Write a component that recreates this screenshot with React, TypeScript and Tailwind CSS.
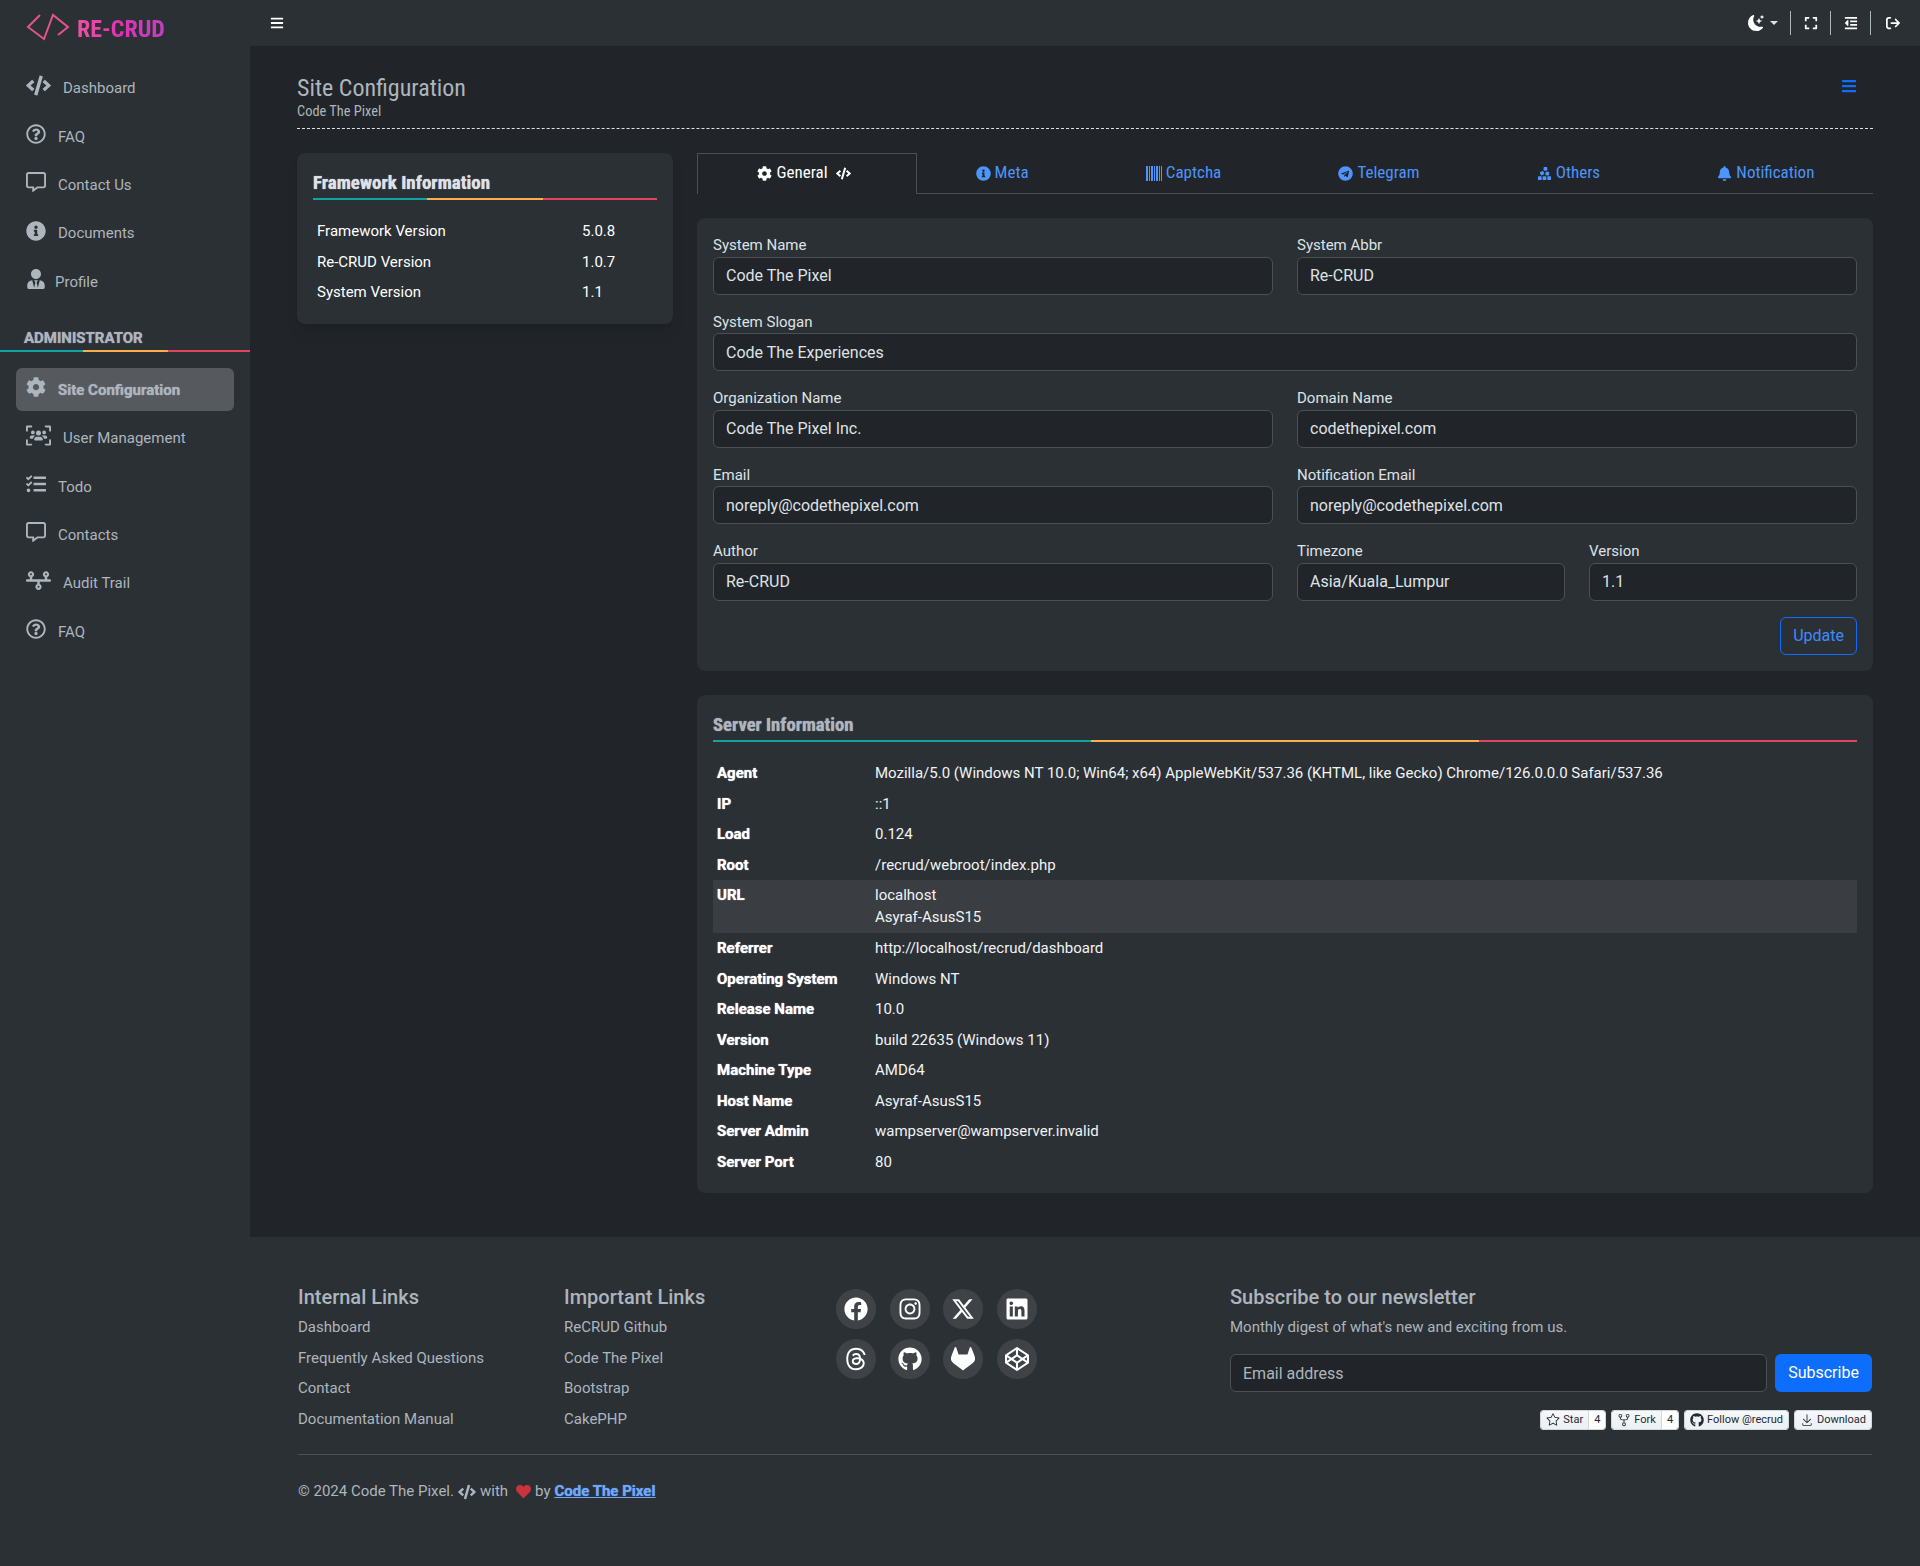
import type { ReactNode } from "react";
import {
  FaBars, FaBell, FaCode, FaCodepen, FaCog, FaExpand, FaFacebook, FaGithub,
  FaHeart, FaInfoCircle, FaInstagram, FaLinkedin, FaOutdent, FaRegCommentAlt, FaRegQuestionCircle,
  FaTasks, FaTelegram, FaUserTie,
} from "react-icons/fa";
import { FaCubesStacked, FaThreads, FaTimeline, FaUsersViewfinder, FaXTwitter, FaArrowRightFromBracket } from "react-icons/fa6";
import { BsGitlab, BsMoonStarsFill } from "react-icons/bs";
import { GoDownload, GoRepoForked, GoStar } from "react-icons/go";

const condensed = "[font-stretch:75%]";
const smeared = "[text-shadow:0_0_1px_currentColor]";

function Rainbow({ className = "" }: { className?: string }) {
  return (
    <div className={`flex h-[2px] ${className}`}>
      <div className="flex-[1] bg-[#11a3a3]" />
      <div className="flex-[1.03] bg-[#fdae4b]" />
      <div className="flex-[1] bg-[#e0445f]" />
    </div>
  );
}

function BarcodeIcon() {
  return (
    <svg width="16" height="15" viewBox="0 0 16 15" fill="currentColor">
      <rect x="0" width="2" height="15" />
      <rect x="3" width="1" height="15" />
      <rect x="5" width="2" height="15" />
      <rect x="8" width="1" height="15" />
      <rect x="10" width="2" height="15" />
      <rect x="13" width="1" height="15" />
      <rect x="15" width="1" height="15" />
    </svg>
  );
}

function NavItem({ icon, label, gap = "gap-3", active }: { icon: ReactNode; label: string; gap?: string; active?: boolean }) {
  return (
    <a className={`flex h-[43px] mb-[5.4px] mx-4 px-[10px] items-center rounded-md text-[15px] text-[#adb5bd] ${gap} ${active ? `bg-[#565a5f] font-bold ${smeared}` : ""}`}>
      <span className="text-[20px] -mt-1">{icon}</span>
      <span className="mt-[2px]">{label}</span>
    </a>
  );
}

function Field({ label, value, className = "" }: { label: string; value: string; className?: string }) {
  return (
    <div className={`mb-4 ${className}`}>
      <label className="block text-[15px] leading-[22.5px] text-[#dee2e6]">{label}</label>
      <input
        readOnly
        defaultValue={value}
        className="block w-full h-[38px] px-3 rounded-md border border-[#495057] bg-[#212529] text-base text-[#dee2e6] outline-none"
      />
    </div>
  );
}

function TabLink({ icon, label }: { icon: ReactNode; label: string }) {
  return (
    <a className="flex-auto flex items-center justify-center gap-1 border-b border-[#495057] text-[15px] text-[#4d94fb]">
      {icon}
      <span className={`text-[17px] ${condensed}`}>{label}</span>
    </a>
  );
}

const serverRows = [
  ["Agent", "Mozilla/5.0 (Windows NT 10.0; Win64; x64) AppleWebKit/537.36 (KHTML, like Gecko) Chrome/126.0.0.0 Safari/537.36"],
  ["IP", "::1"],
  ["Load", "0.124"],
  ["Root", "/recrud/webroot/index.php"],
  ["URL", "localhost\nAsyraf-AsusS15"],
  ["Referrer", "http://localhost/recrud/dashboard"],
  ["Operating System", "Windows NT"],
  ["Release Name", "10.0"],
  ["Version", "build 22635 (Windows 11)"],
  ["Machine Type", "AMD64"],
  ["Host Name", "Asyraf-AsusS15"],
  ["Server Admin", "wampserver@wampserver.invalid"],
  ["Server Port", "80"],
];

const socials = [
  <FaFacebook />, <FaInstagram />, <FaXTwitter />, <FaLinkedin />,
  <FaThreads />, <FaGithub />, <BsGitlab />, <FaCodepen />,
];

function GhButton({ icon, label, count }: { icon: ReactNode; label: string; count?: string }) {
  return (
    <span className="flex h-5 rounded-[3px] overflow-hidden border border-[#d0d7de] text-[11px] leading-[18px] text-[#24292f]">
      <span className="flex items-center gap-[3px] px-[5px] bg-gradient-to-b from-[#f6f8fa] to-[#ebf0f4]">
        {icon}
        {label}
      </span>
      {count && <span className="px-[5px] bg-white border-l border-[#d0d7de]">{count}</span>}
    </span>
  );
}

export default function App() {
  return (
    <div className="flex w-[1920px] h-[1566px] overflow-hidden bg-[#2b3035] font-['Roboto',sans-serif] text-[#dee2e6]">
      {/* Sidebar */}
      <aside className="w-[250px] shrink-0 bg-[#2b3035]">
        <div className="flex h-[46px] items-center">
          <svg width="72" height="46" viewBox="0 0 72 46" fill="none" stroke="#e2558a" strokeWidth="2" className="shrink-0">
            <polyline points="40,15 28,27 44,39 53,15 68,27 58,35" />
          </svg>
          <span className="ml-[5px] mt-[12px] text-[24px] font-bold leading-none bg-gradient-to-r from-[#ea52a0] via-[#e030b5] to-[#c040c0] bg-clip-text text-transparent [font-stretch:75%]">
            RE-CRUD
          </span>
        </div>
        <nav className="mt-[20px]">
          <NavItem icon={<FaCode className="text-[25px]" />} label="Dashboard" />
          <NavItem icon={<FaRegQuestionCircle />} label="FAQ" />
          <NavItem icon={<FaRegCommentAlt />} label="Contact Us" />
          <NavItem icon={<FaInfoCircle />} label="Documents" />
          <NavItem icon={<FaUserTie />} label="Profile" gap="gap-[9px]" />
        </nav>
        <div className={`mt-[25px] pl-6 text-[15px] font-bold leading-[21px] text-[#adb5bd] ${smeared}`}>ADMINISTRATOR</div>
        <Rainbow className="mt-[1px] mb-4" />
        <nav>
          <NavItem icon={<FaCog />} label="Site Configuration" active />
          <NavItem icon={<FaUsersViewfinder className="text-[25px]" />} label="User Management" />
          <NavItem icon={<FaTasks />} label="Todo" />
          <NavItem icon={<FaRegCommentAlt />} label="Contacts" />
          <NavItem icon={<FaTimeline className="text-[25px]" />} label="Audit Trail" />
          <NavItem icon={<FaRegQuestionCircle />} label="FAQ" />
        </nav>
      </aside>

      <div className="flex-1 flex flex-col min-w-0">
        {/* Top bar */}
        <header className="flex h-[46px] shrink-0 items-center justify-between pl-[20px] text-white">
          <FaBars className="text-[14px]" />
          <div className="flex items-center text-[14px]">
            <span className="flex items-center gap-[6px] pr-3">
              <BsMoonStarsFill className="text-[16px]" />
              <span className="border-x-[4px] border-t-[4px] border-x-transparent border-t-[#dee2e6]" />
            </span>
            <span className="flex h-6 w-10 items-center justify-center border-l border-[#adb5bd]"><FaExpand /></span>
            <span className="flex h-6 w-10 items-center justify-center border-l border-[#adb5bd]"><FaOutdent /></span>
            <span className="flex h-6 w-[50px] items-center border-l border-[#adb5bd] pl-[15px]"><FaArrowRightFromBracket /></span>
          </div>
        </header>

        <main className="h-[1191px] shrink-0 bg-[#212529] px-[47px] pt-[24px]">
          {/* Page head */}
          <div className="flex h-[59px] items-start justify-between border-b border-dashed border-[#dee2e6] pt-[3px]">
            <div>
              <h1 className={`text-[24px] leading-[30px] text-[#adb5bd] ${condensed}`}>Site Configuration</h1>
              <p className={`text-[14.4px] leading-[18px] text-[#adb5bd] ${condensed}`}>Code The Pixel</p>
            </div>
            <FaBars className="mt-[5px] mr-[16px] text-[16px] text-[#0d6efd]" />
          </div>

          <div className="grid grid-cols-[376px_1176px] gap-6 mt-6">
            {/* Framework card */}
            <div className="h-[171px] rounded-lg bg-[#2b3035] p-4 shadow-lg">
              <h2 className={`text-[19px] font-bold leading-[28px] text-[#dee2e6] ${condensed} ${smeared}`}>Framework Information</h2>
              <Rainbow className="mt-[1px] mb-[16px]" />
              {[["Framework Version", "5.0.8"], ["Re-CRUD Version", "1.0.7"], ["System Version", "1.1"]].map(([k, v]) => (
                <div key={k} className="flex h-[30.6px] items-center px-1 text-[15px] text-white">
                  <span className="w-[265px]">{k}</span>
                  <span>{v}</span>
                </div>
              ))}
            </div>

            <div>
              {/* Tabs */}
              <div className="flex h-[41px]">
                <a className="flex w-[220px] shrink-0 items-center justify-center gap-1 border border-b-0 border-[#495057] pr-[6px] pb-[2px] text-[15px] text-white">
                  <FaCog />
                  <span className={`text-[17px] ${condensed}`}>General</span>
                  <FaCode className="ml-[4px]" />
                </a>
                <TabLink icon={<FaInfoCircle />} label="Meta" />
                <TabLink icon={<BarcodeIcon />} label="Captcha" />
                <TabLink icon={<FaTelegram />} label="Telegram" />
                <TabLink icon={<FaCubesStacked />} label="Others" />
                <TabLink icon={<FaBell />} label="Notification" />
              </div>

              {/* Form card */}
              <div className="mt-6 h-[453px] rounded-lg bg-[#2b3035] p-4">
                <div className="grid grid-cols-2 gap-x-6">
                  <Field label="System Name" value="Code The Pixel" />
                  <Field label="System Abbr" value="Re-CRUD" />
                  <Field label="System Slogan" value="Code The Experiences" className="col-span-2" />
                  <Field label="Organization Name" value="Code The Pixel Inc." />
                  <Field label="Domain Name" value="codethepixel.com" />
                  <Field label="Email" value="noreply@codethepixel.com" />
                  <Field label="Notification Email" value="noreply@codethepixel.com" />
                  <Field label="Author" value="Re-CRUD" />
                  <div className="grid grid-cols-2 gap-x-6">
                    <Field label="Timezone" value="Asia/Kuala_Lumpur" />
                    <Field label="Version" value="1.1" />
                  </div>
                </div>
                <div className="flex justify-end">
                  <button className="h-[38px] px-3 rounded-md border border-[#0d6efd] text-base text-[#3d8bfd]">Update</button>
                </div>
              </div>

              {/* Server card */}
              <div className="mt-6 h-[498px] rounded-lg bg-[#2b3035] p-4">
                <h2 className={`text-[18.7px] font-bold leading-[28px] text-[#adb5bd] ${condensed} ${smeared}`}>Server Information</h2>
                <Rainbow className="mt-[1px] mb-4" />
                {serverRows.map(([k, v]) => (
                  <div key={k} className={`flex items-start px-1 py-[4px] text-[15px] ${k === "URL" ? "min-h-[53px] bg-[#3a3e43]" : "h-[30.5px]"}`}>
                    <span className={`w-[158px] shrink-0 font-bold text-white leading-[22px] ${smeared}`}>{k}</span>
                    <span className="whitespace-pre-line leading-[22px] text-[#f1f3f5]">{v}</span>
                  </div>
                ))}
              </div>
            </div>
          </div>
        </main>

        {/* Footer */}
        <footer className="flex-1 pl-[48px] pr-[48px] pt-[46px] text-[#adb5bd]">
          <div className="grid grid-cols-[266px_272px_394px_1fr]">
            <div>
              <h5 className="text-[20px] font-medium leading-[28px]">Internal Links</h5>
              <ul className="mt-[1px] text-[15px]">
                {["Dashboard", "Frequently Asked Questions", "Contact", "Documentation Manual"].map((l) => (
                  <li key={l} className="h-[30.5px] leading-[30px]">{l}</li>
                ))}
              </ul>
            </div>
            <div>
              <h5 className="text-[20px] font-medium leading-[28px]">Important Links</h5>
              <ul className="mt-[1px] text-[15px]">
                {["ReCRUD Github", "Code The Pixel", "Bootstrap", "CakePHP"].map((l) => (
                  <li key={l} className="h-[30.5px] leading-[30px]">{l}</li>
                ))}
              </ul>
            </div>
            <div className="grid grid-cols-[repeat(4,40px)] gap-x-[13.7px] gap-y-[10px] pt-[6px] content-start">
              {socials.map((s, i) => (
                <span key={i} className="flex h-10 w-10 items-center justify-center rounded-full bg-[#3f4347] text-[24px] text-white">{s}</span>
              ))}
            </div>
            <div>
              <h5 className="text-[20px] font-medium leading-[28px]">Subscribe to our newsletter</h5>
              <p className="mt-[1px] text-[15px] leading-[30px]">Monthly digest of what's new and exciting from us.</p>
              <div className="mt-[12px] flex gap-2">
                <input
                  readOnly
                  placeholder="Email address"
                  className="h-[38px] flex-1 rounded-md border border-[#495057] bg-[#212529] px-3 text-base text-[#adb5bd] placeholder:text-[#adb5bd] outline-none"
                />
                <button className="h-[38px] w-[97px] rounded-md bg-[#0d6efd] text-base text-white">Subscribe</button>
              </div>
              <div className="mt-[18px] flex justify-end gap-[5px]">
                <GhButton icon={<GoStar className="text-[14px]" />} label="Star" count="4" />
                <GhButton icon={<GoRepoForked className="text-[14px]" />} label="Fork" count="4" />
                <GhButton icon={<FaGithub className="text-[14px]" />} label="Follow @recrud" />
                <GhButton icon={<GoDownload className="text-[14px]" />} label="Download" />
              </div>
            </div>
          </div>
          <div className="mt-[20px] border-t border-[#495057] pt-[26px] flex items-center gap-1 text-[15px] leading-[21px]">
            <span>© 2024 Code The Pixel.</span>
            <FaCode className="text-[18px]" />
            <span>with</span>
            <FaHeart className="ml-1 text-[#c9333a]" />
            <span>by</span>
            <a className={`font-bold text-[#6ea8fe] underline ${smeared}`}>Code The Pixel</a>
          </div>
        </footer>
      </div>
    </div>
  );
}
